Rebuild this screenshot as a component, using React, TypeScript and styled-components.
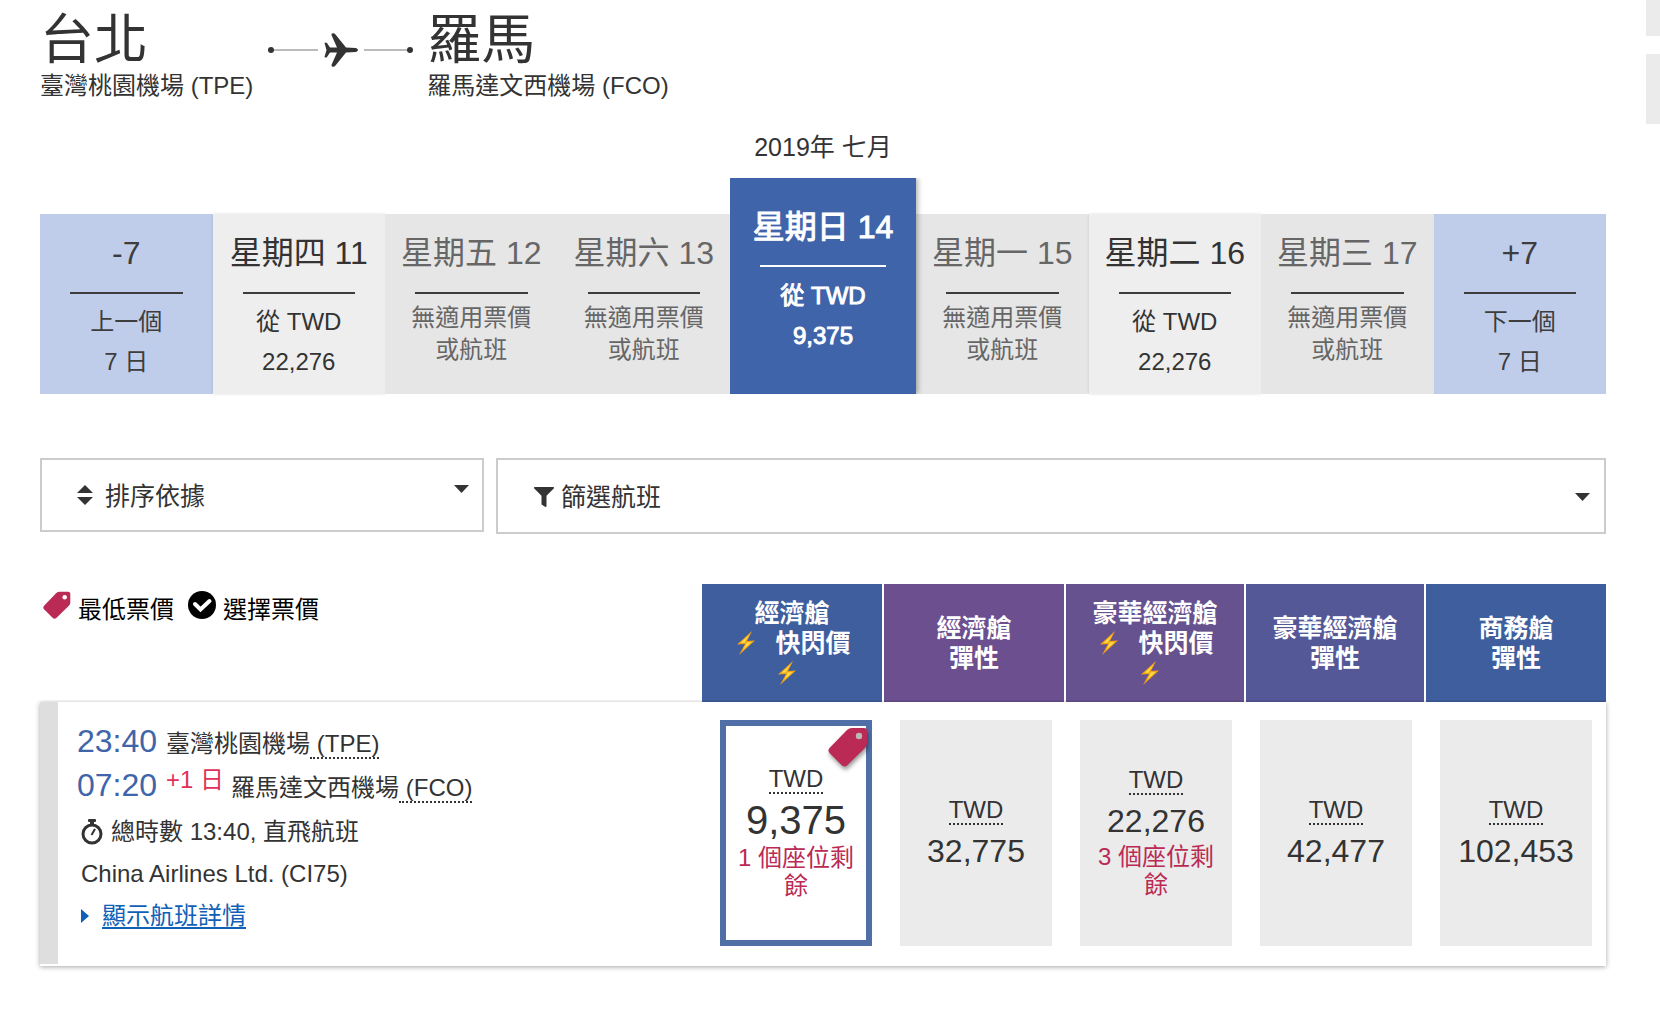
import React from 'react';
import styled, { createGlobalStyle, css } from 'styled-components';
import { FaFilter } from 'react-icons/fa';

const GlobalStyle = createGlobalStyle`
  * { box-sizing: border-box; }
  body {
    margin: 0;
    background: #fff;
    color: #333;
    font-family: "Liberation Sans", "Noto Sans CJK TC", sans-serif;
    font-size: 24px;
    line-height: 32px;
  }
  button, select { font: inherit; color: inherit; border-radius: 0; }
  h1, h2, p { margin: 0; font-weight: 400; }
`;

const Page = styled.div`
  display: flex;
  align-items: flex-start;
  overflow: hidden;
`;

const Main = styled.main`
  flex: 1;
  min-width: 0;
  padding: 10px 40px 40px;
`;

const Rail = styled.aside`
  flex: 0 0 14px;
  display: flex;
  flex-direction: column;
  gap: 18px;
`;

const RailBlock = styled.div<{ $height: number }>`
  height: ${(p) => p.$height}px;
  background: #ebebeb;
`;

const Route = styled.header`
  display: flex;
  align-items: flex-start;
`;

const Stop = styled.div`
  white-space: nowrap;
`;

const City = styled.h1`
  font-size: 54px;
  line-height: 60px;
`;

const Airport = styled.p`
  line-height: 32px;
`;

const RouteLine = styled.div`
  display: flex;
  align-items: center;
  gap: 6px;
  width: 145px;
  height: 40px;
  margin: 20px 14px 0 15px;
  svg { flex: none; }
`;

const Track = styled.span<{ $end?: boolean }>`
  flex: 1;
  display: flex;
  align-items: center;
  flex-direction: ${(p) => (p.$end ? 'row-reverse' : 'row')};
  &::before {
    content: '';
    width: 6px;
    height: 6px;
    border-radius: 50%;
    background: #333;
  }
  &::after {
    content: '';
    flex: 1;
    height: 2px;
    background: #bbb;
  }
`;

const Month = styled.h2`
  margin-top: 29px;
  font-size: 25px;
  line-height: 32px;
  text-align: center;
`;

const Days = styled.nav`
  display: flex;
  align-items: flex-end;
  margin-top: 15px;
`;

type DayKind = 'shift' | 'open' | 'none' | 'picked';

const dayLook = {
  shift: css`background: #c0cdea; color: #3d3d3d;`,
  open: css`background: #eee; color: #333; box-shadow: 0 0 3px rgba(0, 0, 0, 0.12);`,
  none: css`background: #e6e6e6; color: #666;`,
  picked: css`
    flex: 0 0 186px;
    height: 216px;
    padding-top: 29px;
    background: #4064a9;
    color: #fff;
    -webkit-text-stroke: 1px #fff;
    box-shadow: 2px 0 5px rgba(0, 0, 0, 0.3);
    clip-path: inset(0 -8px 0 0);
    z-index: 1;
  `,
};

const Day = styled.button<{ $kind: DayKind }>`
  flex: 1;
  height: 180px;
  padding: 19px 0 0;
  border: 0;
  display: flex;
  flex-direction: column;
  align-items: center;
  ${(p) => dayLook[p.$kind]}
`;

const DayName = styled.span`
  font-size: 32px;
  line-height: 40px;
  white-space: nowrap;
`;

const DayRule = styled.span<{ $picked: boolean }>`
  align-self: stretch;
  height: 2px;
  margin: ${(p) => (p.$picked ? '18px 30px 9px' : '19px 30px 8px')};
  background: ${(p) => (p.$picked ? '#fff' : '#3d3d3d')};
`;

const DayNote = styled.span<{ $tight: boolean }>`
  line-height: ${(p) => (p.$tight ? 32 : 40)}px;
  white-space: pre-line;
`;

const Controls = styled.div`
  display: flex;
  align-items: flex-start;
  gap: 12px;
  margin-top: 64px;
`;

const SortBox = styled.div`
  flex: 0 0 444px;
  height: 74px;
  display: grid;
  align-items: center;
  border: 2px solid #ccc;
  > * { grid-area: 1 / 1; }
  svg { pointer-events: none; }
`;

const SortIcon = styled.svg`
  margin-left: 35px;
`;

const SortSelect = styled.select`
  appearance: none;
  width: 100%;
  height: 70px;
  padding: 2px 60px 0 63px;
  border: 0;
  background: transparent;
  font-size: 25px;
`;

const SortCaret = styled.svg`
  justify-self: end;
  margin: 0 13px 12px 0;
`;

const FilterButton = styled.button`
  flex: 1;
  height: 76px;
  display: flex;
  align-items: center;
  gap: 7px;
  padding: 2px 14px 0 36px;
  border: 2px solid #ccc;
  background: #fff;
  font-size: 25px;
  text-align: left;
`;

const FilterText = styled.span`
  flex: 1;
`;

const FareHead = styled.div`
  display: flex;
  align-items: flex-start;
  margin-top: 50px;
`;

const Legend = styled.div`
  flex: 1;
  display: flex;
  gap: 14px;
  padding: 7px 0 0 3px;
  color: #000;
`;

const LegendItem = styled.span`
  display: flex;
  align-items: flex-start;
  gap: 7px;
  line-height: 38px;
`;

const Cabins = styled.div`
  flex: 0 0 904px;
  display: grid;
  grid-template-columns: 180fr 180fr 178fr 178fr 180fr;
  gap: 2px;
`;

const Cabin = styled.div<{ $tone: string }>`
  height: 118px;
  display: flex;
  flex-direction: column;
  align-items: center;
  justify-content: center;
  background: ${(p) => p.$tone};
  color: #fff;
  font-size: 25px;
  font-weight: 700;
  line-height: 30px;
`;

const CabinLine = styled.span`
  display: flex;
  align-items: center;
  gap: 20px;
  min-height: 30px;
`;

const FlashLine = styled(CabinLine)`
  padding-left: 4px;
`;

const LoneBolt = styled(CabinLine)`
  padding-right: 10px;
`;

const FlightCard = styled.article`
  display: flex;
  background: #fff;
  border-bottom: 2px solid #fff;
  box-shadow: 0 1px 5px rgba(0, 0, 0, 0.35);
  clip-path: inset(-2px -6px -8px -6px);
`;

const Stripe = styled.div`
  flex: 0 0 18px;
  background: #dedede;
`;

const Details = styled.div`
  flex: 1;
  padding: 17px 0 0 19px;
  white-space: nowrap;
`;

const Leg = styled.p`
  display: flex;
  align-items: baseline;
  height: 44px;
  line-height: 44px;
`;

const Time = styled.time`
  margin-right: 9px;
  font-size: 32px;
  color: #4064a9;
`;

const NextDay = styled.span`
  margin-right: 7px;
  color: #e0315a;
  transform: translateY(-8px);
`;

const Code = styled.abbr`
  white-space: pre;
  text-decoration: none;
  border-bottom: 2px dotted #333;
  line-height: 26px;
`;

const Facts = styled.div`
  padding: 4px 0 0 4px;
`;

const Info = styled.p`
  display: flex;
  align-items: center;
  gap: 8px;
  height: 42px;
`;

const DetailLink = styled.a`
  color: #1160b7;
  text-decoration: underline;
  text-decoration-thickness: 2px;
  text-underline-offset: 3px;
  margin-left: 5px;
`;

const Fares = styled.div`
  flex: 0 0 904px;
  display: grid;
  grid-template-columns: repeat(5, 1fr);
  gap: 28px;
  padding: 18px 14px 18px 18px;
`;

const Fare = styled.button<{ $picked?: boolean }>`
  position: relative;
  height: 226px;
  padding: 0;
  display: flex;
  flex-direction: column;
  align-items: center;
  justify-content: center;
  border: ${(p) => (p.$picked ? '6px solid #4f6fa6' : '0')};
  background: ${(p) => (p.$picked ? '#fff' : '#ebebeb')};
`;

const Currency = styled.span`
  display: flex;
  align-items: center;
  height: 36px;
`;

const Amount = styled.span<{ $large?: boolean }>`
  padding-bottom: ${(p) => (p.$large ? 2 : 0)}px;
  font-size: ${(p) => (p.$large ? 40 : 32)}px;
  line-height: 44px;
`;

const Seats = styled.span`
  width: 120px;
  margin-bottom: 4px;
  color: #ba2a55;
  line-height: 28px;
`;

const LowestTag = styled.span`
  position: absolute;
  top: 1px;
  right: -2px;
  display: flex;
  filter: drop-shadow(1px 3px 2px rgba(0, 0, 0, 0.4));
`;

const TagIcon = ({ size, hole = '#fff' }: { size: number; hole?: string }) => (
  <svg width={size} height={size} viewBox="0 0 40 40" aria-hidden="true">
    <path
      fill="#ba2a55"
      d="M24 1h12q3 0 3 3v12q0 3-2 5L19 38.500q-2.500 2-5 0L1.500 26q-2-2.500 0-5L19 3q2-2 5-2z"
    />
    <circle cx="31" cy="9" r="3.200" fill={hole} />
  </svg>
);

const PlaneIcon = () => (
  <svg width="34" height="34" viewBox="0 0 34 34" aria-hidden="true">
    <path
      fill="#333"
      d="M8 .5q2-1 3.500 1L22 14.500l10 .5q4 2 0 4l-10 .5L11.500 32.500q-1.500 2-3.500 1q-.8-.8-.3-2L13 19.500H6L3 24q-1.500 1-2.500 0L2.500 17L.5 10q1-1 2.500 0l3 4.500h7L7.700 2.500q-.5-1.200.3-2z"
    />
  </svg>
);

const CheckIcon = () => (
  <svg width="28" height="28" viewBox="0 0 28 28" aria-hidden="true">
    <circle cx="14" cy="14" r="14" fill="#000" />
    <path d="M7 13l5.500 5.500L21.500 10" fill="none" stroke="#fff" strokeWidth="4" strokeLinecap="round" />
  </svg>
);

const Bolt = () => (
  <svg width="18" height="24" viewBox="0 0 18 24" aria-hidden="true">
    <path d="M15 0L0 13.500l8-.5L2 24l16-14.500-8 .5z" fill="#f5a313" />
    <path d="M12.500 3.500L3.500 12l6.500-.5L6 19l8.500-8-7 .5z" fill="#ffdf4a" />
  </svg>
);

const Stopwatch = () => (
  <svg width="22" height="26" viewBox="0 0 22 26" aria-hidden="true">
    <rect x="7" y="0" width="8" height="3" rx="1" fill="#333" />
    <rect x="9" y="2" width="4" height="3" fill="#333" />
    <circle cx="11" cy="15" r="9" fill="none" stroke="#333" strokeWidth="3" />
    <path d="M10.500 16L14 10" stroke="#333" strokeWidth="2" />
  </svg>
);

const DownCaret = () => (
  <svg width="15" height="8" viewBox="0 0 15 8" aria-hidden="true">
    <path d="M0 0h15L7.500 8z" fill="#333" />
  </svg>
);

const days: { kind: DayKind; name: string; note: string }[] = [
  { kind: 'shift', name: '-7', note: '上一個\n7 日' },
  { kind: 'open', name: '星期四 11', note: '從 TWD\n22,276' },
  { kind: 'none', name: '星期五 12', note: '無適用票價\n或航班' },
  { kind: 'none', name: '星期六 13', note: '無適用票價\n或航班' },
  { kind: 'picked', name: '星期日 14', note: '從 TWD\n9,375' },
  { kind: 'none', name: '星期一 15', note: '無適用票價\n或航班' },
  { kind: 'open', name: '星期二 16', note: '從 TWD\n22,276' },
  { kind: 'none', name: '星期三 17', note: '無適用票價\n或航班' },
  { kind: 'shift', name: '+7', note: '下一個\n7 日' },
];

const cabins = [
  { name: '經濟艙', flash: true, tone: '#3f5e9e' },
  { name: '經濟艙', flash: false, tone: '#6b4f8f' },
  { name: '豪華經濟艙', flash: true, tone: '#675290' },
  { name: '豪華經濟艙', flash: false, tone: '#545897' },
  { name: '商務艙', flash: false, tone: '#3f5e9e' },
];

const fares = [
  { amount: '9,375', seats: '1 個座位剩餘', picked: true },
  { amount: '32,775' },
  { amount: '22,276', seats: '3 個座位剩餘' },
  { amount: '42,477' },
  { amount: '102,453' },
];

export default function App() {
  return (
    <Page>
      <GlobalStyle />
      <Main>
        <Route>
          <Stop>
            <City>台北</City>
            <Airport>臺灣桃園機場 (TPE)</Airport>
          </Stop>
          <RouteLine>
            <Track />
            <PlaneIcon />
            <Track $end />
          </RouteLine>
          <Stop>
            <City>羅馬</City>
            <Airport>羅馬達文西機場 (FCO)</Airport>
          </Stop>
        </Route>

        <Month>2019年 七月</Month>
        <Days>
          {days.map((d) => (
            <Day key={d.name} $kind={d.kind} type="button">
              <DayName>{d.name}</DayName>
              <DayRule $picked={d.kind === 'picked'} />
              <DayNote $tight={d.kind === 'none'}>{d.note}</DayNote>
            </Day>
          ))}
        </Days>

        <Controls>
          <SortBox>
            <SortSelect aria-label="排序依據">
              <option>排序依據</option>
            </SortSelect>
            <SortIcon width="16" height="20" viewBox="0 0 16 20" aria-hidden="true">
              <path d="M8 0l8 8H0zM0 12h16l-8 8z" fill="#333" />
            </SortIcon>
            <SortCaret width="15" height="8" viewBox="0 0 15 8" aria-hidden="true">
              <path d="M0 0h15L7.500 8z" fill="#333" />
            </SortCaret>
          </SortBox>
          <FilterButton type="button">
            <FaFilter size={20} />
            <FilterText>篩選航班</FilterText>
            <DownCaret />
          </FilterButton>
        </Controls>

        <FareHead>
          <Legend>
            <LegendItem>
              <TagIcon size={28} />
              最低票價
            </LegendItem>
            <LegendItem>
              <CheckIcon />
              選擇票價
            </LegendItem>
          </Legend>
          <Cabins>
            {cabins.map((c, i) => (
              <Cabin key={i} $tone={c.tone}>
                <CabinLine>{c.name}</CabinLine>
                {c.flash ? (
                  <>
                    <FlashLine>
                      <Bolt />
                      快閃價
                    </FlashLine>
                    <LoneBolt>
                      <Bolt />
                    </LoneBolt>
                  </>
                ) : (
                  <CabinLine>彈性</CabinLine>
                )}
              </Cabin>
            ))}
          </Cabins>
        </FareHead>

        <FlightCard>
          <Stripe />
          <Details>
            <Leg>
              <Time>23:40</Time>
              臺灣桃園機場<Code title="TPE"> (TPE)</Code>
            </Leg>
            <Leg>
              <Time>07:20</Time>
              <NextDay>+1 日</NextDay>
              羅馬達文西機場<Code title="FCO"> (FCO)</Code>
            </Leg>
            <Facts>
              <Info>
                <Stopwatch />
                總時數 13:40, 直飛航班
              </Info>
              <Info>China Airlines Ltd. (CI75)</Info>
              <Info>
                <svg width="8" height="14" viewBox="0 0 8 14" aria-hidden="true">
                  <path d="M0 0l8 7-8 7z" fill="#1160b7" />
                </svg>
                <DetailLink href="#details">顯示航班詳情</DetailLink>
              </Info>
            </Facts>
          </Details>
          <Fares>
            {fares.map((f) => (
              <Fare key={f.amount} $picked={f.picked} type="button">
                <Currency>
                  <Code title="TWD">TWD</Code>
                </Currency>
                <Amount $large={f.picked}>{f.amount}</Amount>
                {f.seats && <Seats>{f.seats}</Seats>}
                {f.picked && (
                  <LowestTag>
                    <TagIcon size={40} hole="#b9b9b9" />
                  </LowestTag>
                )}
              </Fare>
            ))}
          </Fares>
        </FlightCard>
      </Main>
      <Rail>
        <RailBlock $height={36} />
        <RailBlock $height={70} />
      </Rail>
    </Page>
  );
}
